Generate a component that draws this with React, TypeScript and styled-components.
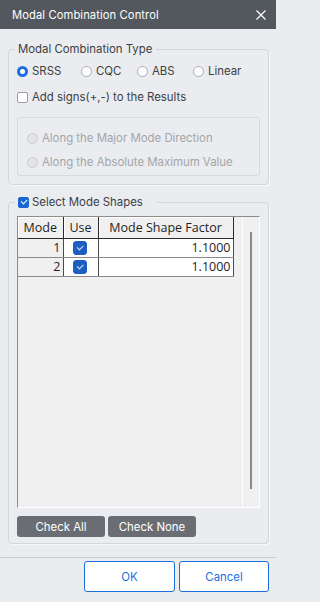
import React from 'react';
import styled, { createGlobalStyle } from 'styled-components';

const GlobalStyle = createGlobalStyle`
  html, body {
    margin: 0;
    padding: 0;
    background: #eaecef;
  }
  * {
    box-sizing: border-box;
  }
`;

const Window = styled.div`
  width: 276px;
  height: 602px;
  display: flex;
  flex-direction: column;
  background: #eaecef;
  font-family: Inter, "Noto Sans", sans-serif;
  font-size: 11.4px;
  color: #3b3f45;
`;

const TitleBar = styled.div`
  height: 29px;
  flex: none;
  display: flex;
  align-items: center;
  justify-content: space-between;
  padding: 0 9px 0 12px;
  background: #53585f;
  color: #fff;
`;

const Title = styled.span`
  font-size: 11.2px;
  letter-spacing: 0.1px;
`;

const CloseButton = styled.button`
  border: none;
  background: none;
  padding: 0;
  width: 12px;
  height: 12px;
  display: flex;
  align-items: center;
  justify-content: center;
  color: #fff;
  cursor: pointer;
`;

const Body = styled.div`
  display: flex;
  flex-direction: column;
  padding: 12px 7px 0 8px;
`;

const Group = styled.fieldset<{ $gap?: number; $padBottom?: number }>`
  margin: 0 0 ${p => p.$gap ?? 0}px 0;
  padding: 5px 8px ${p => p.$padBottom ?? 7}px 8px;
  border: 1px solid #d3d6db;
  border-radius: 4px;
  box-shadow: 1px 1px 0 #f6f7f8;
  min-width: 0;
`;

const GroupLegend = styled.legend<{ $padRight?: number }>`
  margin-left: -2px;
  padding: 0 ${p => p.$padRight ?? 4}px 0 3px;
  line-height: 16px;
  font-size: 11.4px;
  color: #3b3f45;
  display: flex;
  align-items: center;
  gap: 3px;
`;

const OptionRow = styled.div`
  display: flex;
  align-items: center;
  height: 18px;
`;

const Option = styled.label<{ $disabled?: boolean; $w?: number }>`
  display: flex;
  align-items: center;
  gap: 4px;
  white-space: nowrap;
  width: ${p => (p.$w ? `${p.$w}px` : 'auto')};
  color: ${p => (p.$disabled ? '#a3a6aa' : '#3b3f45')};
`;

const Radio = styled.input.attrs({ type: 'radio' })`
  appearance: none;
  margin: 0;
  width: 11px;
  height: 11px;
  border-radius: 50%;
  border: 1px solid #a9acb0;
  background: #fff;
  flex: none;

  &:checked {
    border: 3px solid #1a6fe0;
  }

  &:disabled {
    background: #e2e4e7;
    border-color: #c9cbce;
  }
`;

const Check = styled.input.attrs({ type: 'checkbox' })<{ $size?: number }>`
  appearance: none;
  margin: 0;
  width: ${p => p.$size ?? 11}px;
  height: ${p => p.$size ?? 11}px;
  border: 1px solid #9a9da1;
  border-radius: 2px;
  background: #fff;
  flex: none;
  display: grid;
  place-items: center;

  &:checked {
    background: #1a67d2;
    border-color: #1a67d2;
  }

  &:checked::after {
    content: '';
    width: 5px;
    height: 2.5px;
    border-left: 1.4px solid #fff;
    border-bottom: 1.4px solid #fff;
    transform: translateY(-1px) rotate(-45deg);
  }
`;

const TableCheck = styled(Check)`
  border-radius: 3px;
  background: #1c5fc0;
  border-color: #1c5fc0;

  &:checked {
    background: #1c5fc0;
    border-color: #1c5fc0;
  }

  &:checked::after {
    width: 5px;
    height: 2.5px;
    border-left: 1px solid #dfe8f6;
    border-bottom: 1px solid #dfe8f6;
  }
`;

const SignsRow = styled(OptionRow)`
  margin-top: 8px;
`;

const InnerGroup = styled.div`
  margin-top: 11px;
  padding: 11px 9px 4px 9px;
  border: 1px solid #d6d9dd;
  border-radius: 3px;
  display: flex;
  flex-direction: column;
  gap: 6px;
`;

const Grid = styled.div`
  height: 292px;
  display: flex;
  background: #f0f0f0;
  border-top: 1px solid #8d8d8d;
  border-left: 1px solid #8d8d8d;
  border-right: 1px solid #fff;
  border-bottom: 1px solid #fff;
  margin-top: 1px;
`;

const TableArea = styled.div`
  flex: 1;
`;

const Table = styled.table`
  border-collapse: collapse;
  font-family: "Open Sans", "Noto Sans", sans-serif;
  font-size: 12.5px;
  color: #1e1e1e;
`;

const Th = styled.th<{ $w: number }>`
  width: ${p => p.$w}px;
  height: 21px;
  padding: 0;
  font-weight: normal;
  background: #f0f0f0;
  border-right: 1px solid #2a2a2a;
  border-bottom: 1px solid #2a2a2a;
  box-shadow: inset 1px 1px 0 #fff;
  text-align: center;
`;

const Td = styled.td<{ $shade?: boolean; $align?: string }>`
  height: 19px;
  padding: 0 2px 0 0;
  background: ${p => (p.$shade ? '#f0f0f0' : '#fff')};
  border-right: 1px solid #4a4a4a;
  border-bottom: 1px solid #8a8a8a;
  text-align: ${p => p.$align ?? 'right'};
  vertical-align: middle;
`;

const CheckCell = styled.div`
  display: flex;
  justify-content: center;
`;

const ScrollTrack = styled.div`
  width: 17px;
  flex: none;
  border-left: 1px solid #fff;
  padding: 15px 0 18px 0;
  display: flex;
  justify-content: center;
`;

const ScrollThumb = styled.div`
  width: 2px;
  height: 100%;
  background: #8a8a8a;
`;

const ButtonRow = styled.div`
  display: flex;
  gap: 3px;
  margin-top: 8px;
`;

const GrayButton = styled.button`
  width: 88px;
  height: 21px;
  border: none;
  border-radius: 3px;
  background: #6a6e74;
  color: #fff;
  font-family: Inter, "Noto Sans", sans-serif;
  font-size: 11.4px;
  padding: 0;
`;

const Footer = styled.div`
  margin-top: 13px;
  border-top: 1px solid #c9cdd2;
  display: flex;
  justify-content: flex-end;
  gap: 4px;
  padding: 3px 7px 0 0;
`;

const DialogButton = styled.button<{ $w: number }>`
  width: ${p => p.$w}px;
  height: 31px;
  border: 1px solid #1a6fe0;
  border-radius: 3px;
  background: #fff;
  color: #1a6fe0;
  font-family: Inter, "Noto Sans", sans-serif;
  font-size: 11.4px;
  padding: 0;
`;

const modes = [
    { mode: 1, use: true, factor: '1.1000' },
    { mode: 2, use: true, factor: '1.1000' },
];

const App: React.FC = () => {
    return (
        <Window>
            <GlobalStyle />
            <TitleBar>
                <Title>Modal Combination Control</Title>
                <CloseButton aria-label="Close">
                    <svg width="10" height="10" viewBox="0 0 10 10">
                        <path d="M0.5 0.5 L9.5 9.5 M9.5 0.5 L0.5 9.5" stroke="#fff" strokeWidth="1.2" />
                    </svg>
                </CloseButton>
            </TitleBar>
            <Body>
                <Group $gap={9} $padBottom={8}>
                    <GroupLegend>Modal Combination Type</GroupLegend>
                    <OptionRow>
                        <Option $w={64}><Radio name="type" defaultChecked />SRSS</Option>
                        <Option $w={56}><Radio name="type" />CQC</Option>
                        <Option $w={56}><Radio name="type" />ABS</Option>
                        <Option><Radio name="type" />Linear</Option>
                    </OptionRow>
                    <SignsRow>
                        <Option><Check />Add signs(+,-) to the Results</Option>
                    </SignsRow>
                    <InnerGroup>
                        <OptionRow>
                            <Option $disabled><Radio name="sign" disabled />Along the Major Mode Direction</Option>
                        </OptionRow>
                        <OptionRow>
                            <Option $disabled><Radio name="sign" disabled />Along the Absolute Maximum Value</Option>
                        </OptionRow>
                    </InnerGroup>
                </Group>
                <Group $padBottom={6}>
                    <GroupLegend $padRight={14}>
                        <Check defaultChecked />Select Mode Shapes
                    </GroupLegend>
                    <Grid>
                        <TableArea>
                            <Table>
                                <thead>
                                    <tr>
                                        <Th $w={45}>Mode</Th>
                                        <Th $w={35}>Use</Th>
                                        <Th $w={135}>Mode Shape Factor</Th>
                                    </tr>
                                </thead>
                                <tbody>
                                    {modes.map(m => (
                                        <tr key={m.mode}>
                                            <Td $shade>{m.mode}</Td>
                                            <Td $align="center">
                                                <CheckCell><TableCheck $size={14} defaultChecked={m.use} /></CheckCell>
                                            </Td>
                                            <Td>{m.factor}</Td>
                                        </tr>
                                    ))}
                                </tbody>
                            </Table>
                        </TableArea>
                        <ScrollTrack>
                            <ScrollThumb />
                        </ScrollTrack>
                    </Grid>
                    <ButtonRow>
                        <GrayButton>Check All</GrayButton>
                        <GrayButton>Check None</GrayButton>
                    </ButtonRow>
                </Group>
            </Body>
            <Footer>
                <DialogButton $w={91}>OK</DialogButton>
                <DialogButton $w={90}>Cancel</DialogButton>
            </Footer>
        </Window>
    );
};

export default App;
